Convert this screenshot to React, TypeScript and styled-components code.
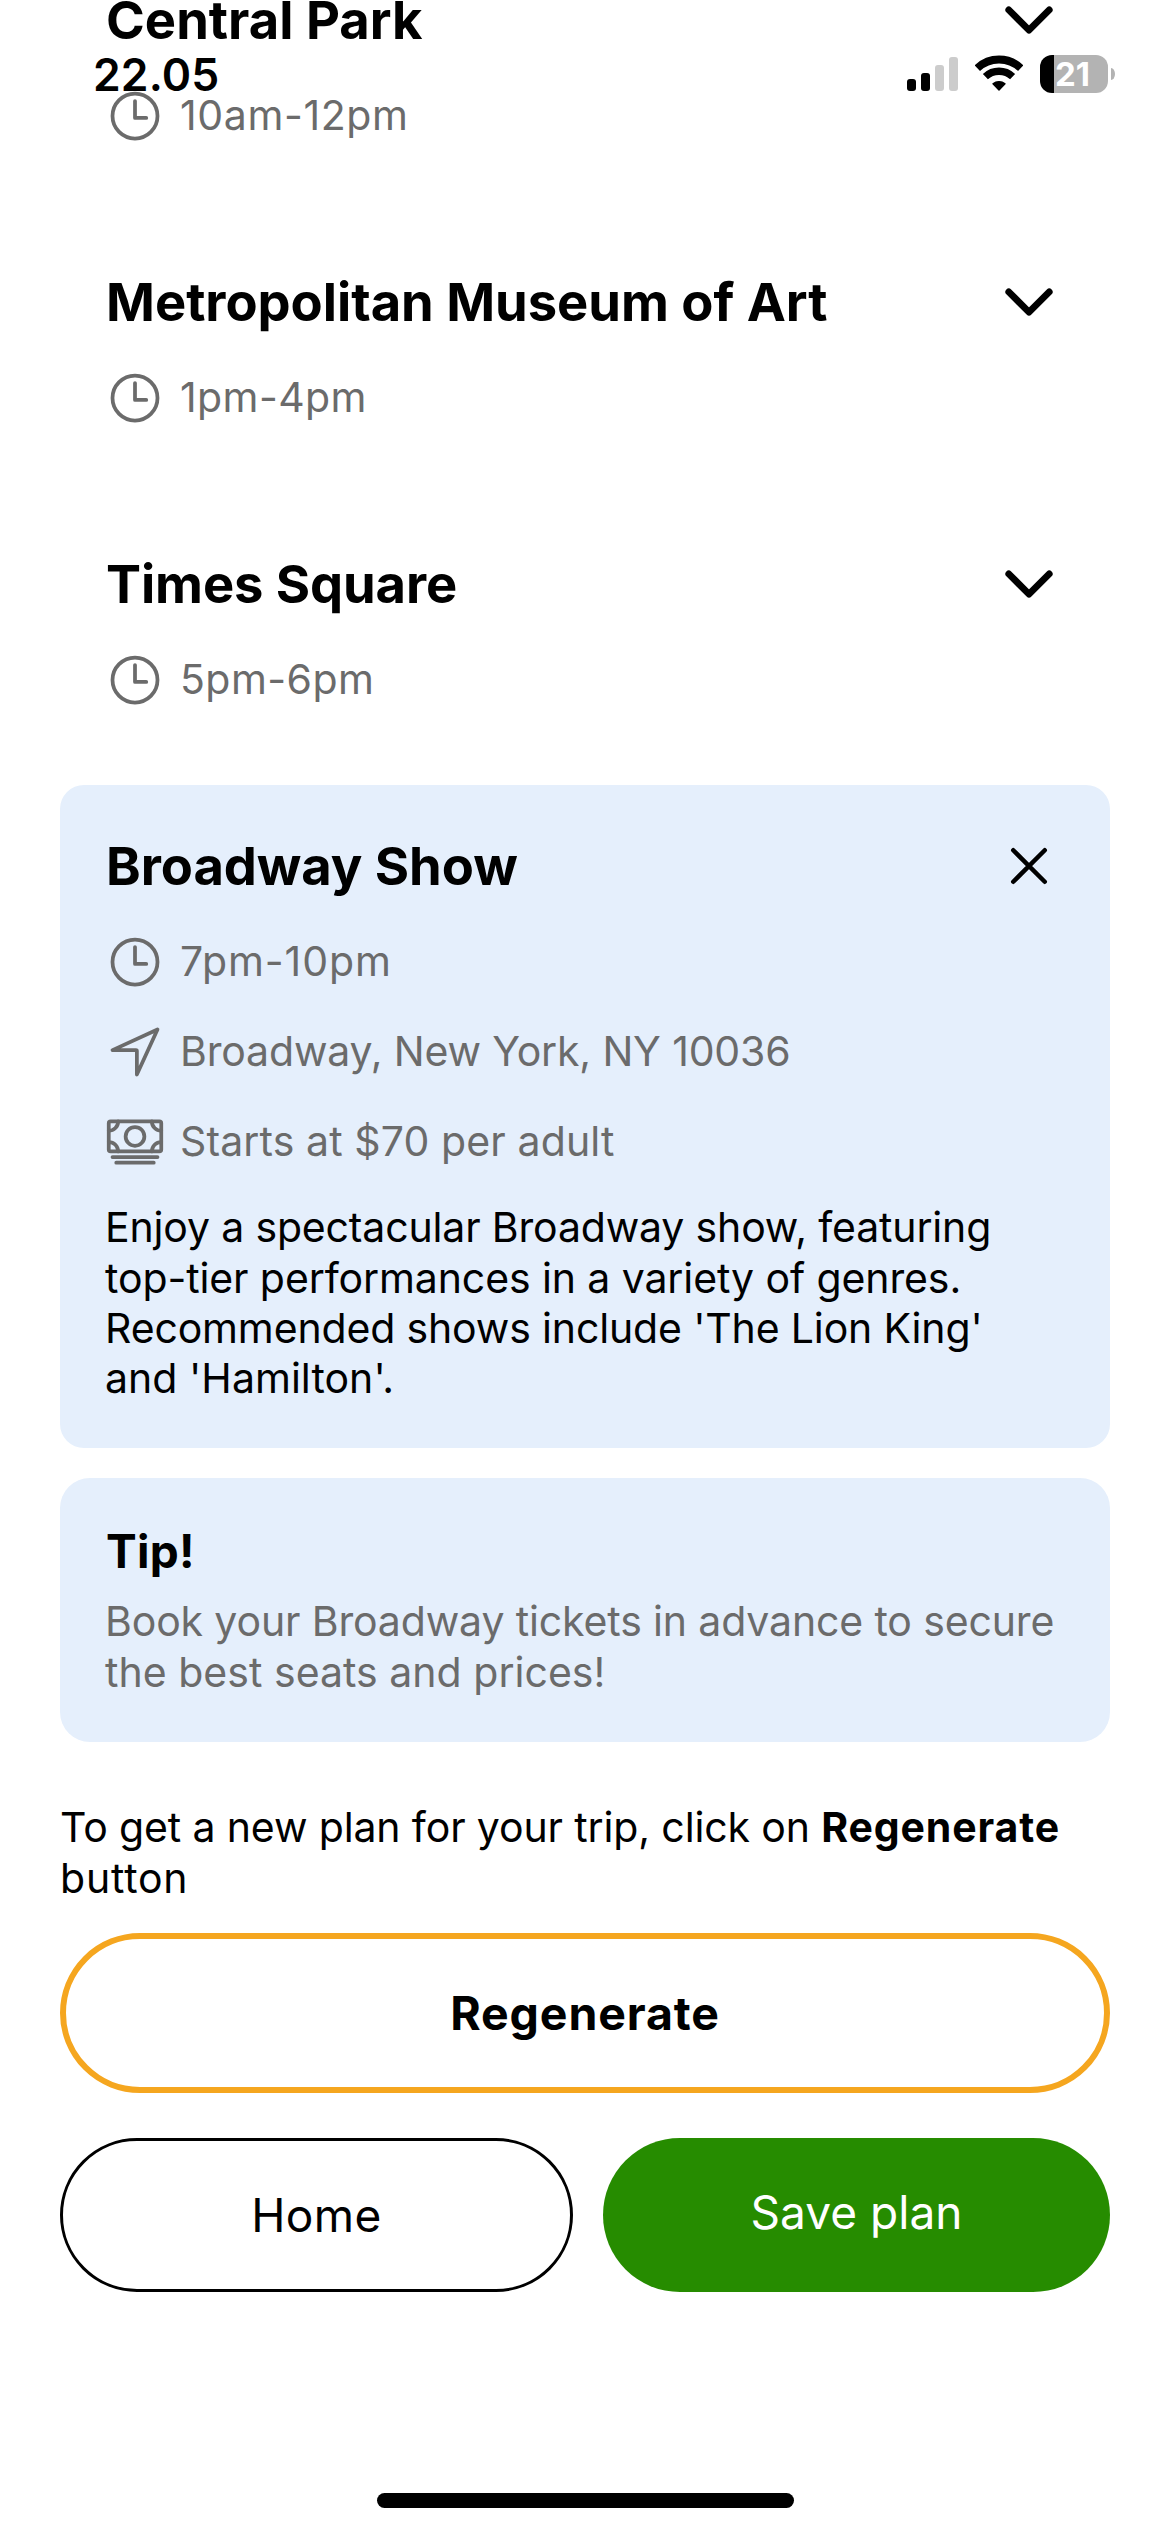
import React from "react";
import styled, { createGlobalStyle } from "styled-components";
import {
  IoCashOutline,
  IoChevronDown,
  IoCloseOutline,
  IoNavigateOutline,
  IoTimeOutline,
} from "react-icons/io5";

const colors = {
  text: "#000000",
  muted: "#6b6b6b",
  panel: "#e5effc",
  accent: "#f5a61f",
  primary: "#268c00",
};

const GlobalStyle = createGlobalStyle`
  * { box-sizing: border-box; }
  body {
    margin: 0;
    background: #ffffff;
    color: ${colors.text};
    font-family: Inter, "Liberation Sans", sans-serif;
  }
  button { font-family: inherit; }
`;

const Screen = styled.div`
  position: relative;
  width: 1170px;
  height: 2532px;
  overflow: hidden;
  background: #ffffff;
`;

const StatusBar = styled.header`
  position: absolute;
  top: 0;
  left: 0;
  right: 0;
  height: 148px;
  padding: 0 55px 0 93px;
  display: flex;
  align-items: center;
  justify-content: space-between;
`;

const Clock = styled.span`
  font-size: 44.5px;
  font-weight: 600;
  line-height: 54px;
  letter-spacing: 0.1px;
  padding-top: 1px;
`;

const Indicators = styled.div`
  display: flex;
  align-items: center;
`;

const Signal = styled.div`
  display: flex;
  align-items: flex-end;
  gap: 5px;
  height: 34px;
  margin-right: 17px;
`;

const SignalBar = styled.span<{ $height: number; $on: boolean }>`
  width: 9px;
  height: ${(p) => p.$height}px;
  border-radius: 3px;
  background: ${(p) => (p.$on ? "#000000" : "#cccccc")};
`;

const WifiIcon = styled.svg`
  width: 48px;
  height: 36px;
  margin: 0 17px 2px 0;
`;

const Battery = styled.div`
  width: 68px;
  height: 38px;
  border-radius: 12px;
  background: linear-gradient(to right, #000000 14px, #b3b3b3 14px);
  color: #ffffff;
  font-size: 33px;
  font-weight: 700;
  line-height: 38px;
  padding-left: 15px;
`;

const BatteryCap = styled.span`
  width: 4px;
  height: 12px;
  margin-left: 3px;
  border-radius: 0 4px 4px 0 / 0 6px 6px 0;
  background: #b3b3b3;
`;

const Content = styled.main`
  display: flex;
  flex-direction: column;
  padding: 0 60px;
  margin-top: -61px;
`;

const StopList = styled.section`
  display: flex;
  flex-direction: column;
  gap: 30px;
`;

const StopCard = styled.article<{ $open: boolean }>`
  display: flex;
  flex-direction: column;
  gap: 30px;
  padding: 45px;
  border-radius: 24px;
  background: ${(p) => (p.$open ? colors.panel : "transparent")};
`;

const StopHeader = styled.div`
  display: flex;
  align-items: center;
  justify-content: space-between;
  height: 72px;
`;

const StopTitle = styled.h2<{ $track: number }>`
  margin: 0;
  padding-left: 1px;
  font-size: 52.5px;
  font-weight: 700;
  line-height: 72px;
  letter-spacing: ${(p) => p.$track}px;
`;

const DetailRow = styled.div`
  display: flex;
  align-items: center;
  gap: 15px;
  height: 60px;
  color: ${colors.muted};
`;

const DetailText = styled.span<{ $track: number }>`
  font-size: 41px;
  line-height: 58px;
  padding-bottom: 2px;
  letter-spacing: ${(p) => p.$track}px;
  white-space: nowrap;
`;

const Paragraph = styled.p<{ $muted?: boolean; $leading: number }>`
  margin: 0;
  padding-top: 0.3px;
  font-size: 41px;
  line-height: ${(p) => p.$leading}px;
  color: ${(p) => (p.$muted ? colors.muted : colors.text)};
`;

const Line = styled.span<{ $track: number }>`
  display: block;
  letter-spacing: ${(p) => p.$track}px;
  white-space: nowrap;
`;

const Strong = styled.strong`
  font-weight: 700;
  letter-spacing: 0.86px;
`;

const TipCard = styled.aside`
  display: flex;
  flex-direction: column;
  gap: 15.4px;
  height: 264px;
  margin-top: 30px;
  padding: 45px;
  border-radius: 30px;
  background: ${colors.panel};
`;

const TipTitle = styled.h3`
  margin: 0;
  padding-left: 1px;
  font-size: 46px;
  font-weight: 700;
  line-height: 57px;
  letter-spacing: 0.28px;
`;

const Hint = styled.div`
  height: 102px;
  margin: 59.5px 0 29.5px;
`;

const PillButton = styled.button<{ $track: number }>`
  box-sizing: content-box;
  margin: 0;
  padding: 0;
  border: 0 solid transparent;
  border-radius: 80px;
  background: transparent;
  color: ${colors.text};
  font-size: 46px;
  font-weight: 400;
  line-height: 148px;
  letter-spacing: ${(p) => p.$track}px;
`;

const RegenerateButton = styled(PillButton)`
  border: 6px solid ${colors.accent};
  font-size: 46.5px;
  font-weight: 700;
`;

const HomeButton = styled(PillButton)`
  flex: 1 1 0;
  border: 3px solid ${colors.text};
`;

const SaveButton = styled(PillButton)`
  flex: 1 1 0;
  display: flex;
  justify-content: center;
  align-items: flex-start;
  background: ${colors.primary};
  color: #ffffff;
`;

const Actions = styled.div`
  display: flex;
  gap: 30px;
  margin-top: 45px;
`;

const HomeIndicator = styled.div`
  position: absolute;
  left: 377px;
  bottom: 24px;
  width: 417px;
  height: 15px;
  border-radius: 8px;
  background: #000000;
`;

type Spaced = { text: string; track: number };
type Stop = {
  title: Spaced;
  time: Spaced;
  address?: Spaced;
  price?: Spaced;
  description?: Spaced[];
};

const stops: Stop[] = [
  { title: { text: "Central Park", track: 0.02 }, time: { text: "10am-12pm", track: 0.61 } },
  {
    title: { text: "Metropolitan Museum of Art", track: -0.03 },
    time: { text: "1pm-4pm", track: 0.41 },
  },
  { title: { text: "Times Square", track: -0.1 }, time: { text: "5pm-6pm", track: 0.45 } },
  {
    title: { text: "Broadway Show", track: -0.05 },
    time: { text: "7pm-10pm", track: 0.9 },
    address: { text: "Broadway, New York, NY 10036", track: -0.16 },
    price: { text: "Starts at $70 per adult", track: 0.12 },
    description: [
      { text: "Enjoy a spectacular Broadway show, featuring", track: -0.16 },
      { text: "top-tier performances in a variety of genres.", track: -0.1 },
      { text: "Recommended shows include 'The Lion King'", track: -0.15 },
      { text: "and 'Hamilton'.", track: 0.04 },
    ],
  },
];

const signalHeights = [12, 18, 26, 34];

function StopItem({ stop }: { stop: Stop }) {
  const open = Boolean(stop.description);
  return (
    <StopCard $open={open}>
      <StopHeader>
        <StopTitle $track={stop.title.track}>{stop.title.text}</StopTitle>
        {open ? <IoCloseOutline size={72} /> : <IoChevronDown size={72} />}
      </StopHeader>
      <DetailRow>
        <IoTimeOutline size={60} />
        <DetailText $track={stop.time.track}>{stop.time.text}</DetailText>
      </DetailRow>
      {stop.address && (
        <DetailRow>
          <IoNavigateOutline size={60} />
          <DetailText $track={stop.address.track}>{stop.address.text}</DetailText>
        </DetailRow>
      )}
      {stop.price && (
        <DetailRow>
          <IoCashOutline size={60} />
          <DetailText $track={stop.price.track}>{stop.price.text}</DetailText>
        </DetailRow>
      )}
      {stop.description && (
        <Paragraph $leading={50.3}>
          {stop.description.map((line) => (
            <Line key={line.text} $track={line.track}>
              {line.text}
            </Line>
          ))}
        </Paragraph>
      )}
    </StopCard>
  );
}

export default function App() {
  return (
    <Screen>
      <GlobalStyle />
      <Content>
        <StopList>
          {stops.map((stop) => (
            <StopItem key={stop.title.text} stop={stop} />
          ))}
        </StopList>
        <TipCard>
          <TipTitle>Tip!</TipTitle>
          <Paragraph $muted $leading={51}>
            <Line $track={-0.137}>Book your Broadway tickets in advance to secure</Line>
            <Line $track={0.03}>the best seats and prices!</Line>
          </Paragraph>
        </TipCard>
        <Hint>
          <Paragraph $leading={51}>
            <Line $track={-0.13}>
              To get a new plan for your trip, click on <Strong>Regenerate</Strong>
            </Line>
            <Line $track={0.8}>button</Line>
          </Paragraph>
        </Hint>
        <RegenerateButton $track={0.85}>Regenerate</RegenerateButton>
        <Actions>
          <HomeButton $track={0.4}>Home</HomeButton>
          <SaveButton $track={0.06}>Save plan</SaveButton>
        </Actions>
      </Content>
      <StatusBar>
        <Clock>22.05</Clock>
        <Indicators>
          <Signal>
            {signalHeights.map((height, i) => (
              <SignalBar key={height} $height={height} $on={i < 2} />
            ))}
          </Signal>
          <WifiIcon viewBox="0 0 48 36" fill="none" stroke="#000000">
            <path d="M2.3 13.15A31.5 31.5 0 0 1 45.7 13.15" strokeWidth="7.8" />
            <path d="M10.4 21.7A19.7 19.7 0 0 1 37.6 21.7" strokeWidth="7.3" />
            <path
              d="M24 35L18 28.7A9.6 9.6 0 0 1 30 28.7Z"
              fill="#000000"
              strokeWidth="1.4"
              strokeLinejoin="round"
            />
          </WifiIcon>
          <Battery>21</Battery>
          <BatteryCap />
        </Indicators>
      </StatusBar>
      <HomeIndicator />
    </Screen>
  );
}
